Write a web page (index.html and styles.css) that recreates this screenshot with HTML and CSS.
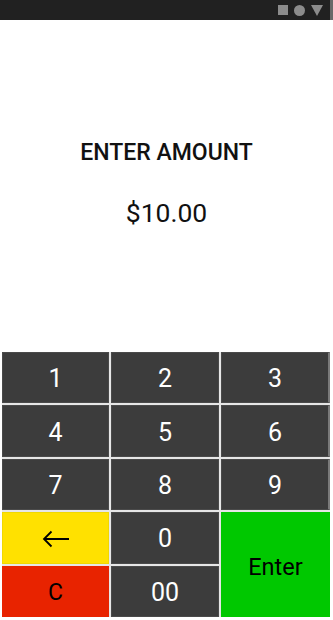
FILE: index.html
```html
<!DOCTYPE html>
<html>
<head>
  <title>Enter Amount</title>
  <link rel="stylesheet" href="styles.css">
</head>
<body>
  <div class="status-bar">
    <span class="icon square"></span>
    <span class="icon circle"></span>
    <span class="icon triangle"></span>
  </div>

  <div class="display">
    <div class="title">ENTER AMOUNT</div>
    <div class="amount">$10.00</div>
  </div>

  <div class="keypad">
    <div class="key">1</div>
    <div class="key">2</div>
    <div class="key edge">3</div>
    <div class="key">4</div>
    <div class="key">5</div>
    <div class="key edge">6</div>
    <div class="key">7</div>
    <div class="key">8</div>
    <div class="key edge">9</div>
    <div class="key back">
      <svg width="28" height="18" viewBox="0 0 28 18">
        <path d="M27 9H2M9.5 1.5L2 9L9.5 16.5" fill="none" stroke="#000" stroke-width="1.8"/>
      </svg>
    </div>
    <div class="key">0</div>
    <div class="key enter">Enter</div>
    <div class="key clear">C</div>
    <div class="key">00</div>
  </div>
</body>
</html>
```

FILE: styles.css
```css
body {
  margin: 0;
  width: 333px;
  height: 620px;
  background: #fff;
  font-family: Roboto, "Noto Sans", sans-serif;
  display: flex;
  flex-direction: column;
  overflow: hidden;
}

.status-bar {
  height: 20px;
  background: #212121;
  border-right: 3px solid #6a6a6a;
  display: flex;
  align-items: center;
  justify-content: flex-end;
  gap: 6px;
  padding-right: 7px;
}

.icon {
  display: block;
  background: #8c8c8c;
}

.square {
  width: 10px;
  height: 10px;
}

.circle {
  width: 11px;
  height: 11px;
  border-radius: 50%;
}

.triangle {
  width: 0;
  height: 0;
  background: none;
  border-left: 6px solid transparent;
  border-right: 6px solid transparent;
  border-top: 11px solid #8c8c8c;
}

.display {
  height: 332px;
  display: flex;
  flex-direction: column;
  align-items: center;
  padding-top: 120px;
  box-sizing: border-box;
}

.title {
  font-size: 23px;
  font-weight: 500;
  line-height: 26px;
  color: #111;
}

.amount {
  margin-top: 31px;
  font-size: 26.5px;
  line-height: 32px;
  color: #111;
}

.keypad {
  margin-left: 2px;
  width: 328px;
  display: grid;
  grid-template-columns: 107px 108px 109px;
  grid-template-rows: repeat(5, 51.4px);
  gap: 2px;
  background: #e6e6e6;
}

.key {
  background: #3c3c3c;
  border: 1px solid #4a4a4a;
  box-sizing: border-box;
  color: #fff;
  font-size: 25px;
  padding-top: 2px;
  display: flex;
  align-items: center;
  justify-content: center;
}

.edge {
  border-right: 2px solid #7a7a7a;
}

.back {
  background: #ffe100;
  border-color: #f0d800;
}

.enter {
  grid-row: span 2;
  background: #00c800;
  border: none;
  color: #000;
  font-size: 23.5px;
  padding-top: 5px;
}

.clear {
  background: #e82300;
  border-color: #e82300;
  color: #000;
  font-size: 23px;
}
```
